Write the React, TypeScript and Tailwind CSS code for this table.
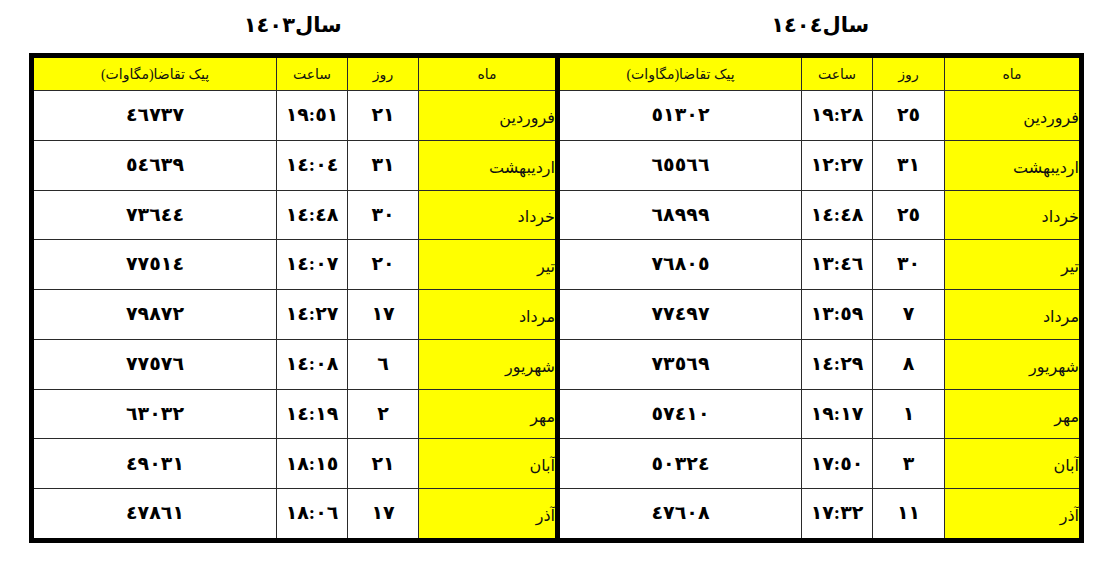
import React from "react";

const toAr = (s: string) => s.replace(/[0-9]/g, (d) => "٠١٢٣٤٥٦٧٨٩"[Number(d)]);

type Row = [string, string, string, string];

const left: Row[] = [
  ["فروردین", "21", "19:51", "46737"],
  ["اردیبهشت", "31", "14:04", "54639"],
  ["خرداد", "30", "14:48", "73644"],
  ["تیر", "20", "14:07", "77514"],
  ["مرداد", "17", "14:27", "79872"],
  ["شهریور", "6", "14:08", "77576"],
  ["مهر", "2", "14:19", "63032"],
  ["آبان", "21", "18:15", "49031"],
  ["آذر", "17", "18:06", "47861"],
];

const right: Row[] = [
  ["فروردین", "25", "19:28", "51302"],
  ["اردیبهشت", "31", "12:27", "65566"],
  ["خرداد", "25", "14:48", "68999"],
  ["تیر", "30", "13:46", "76805"],
  ["مرداد", "7", "13:59", "77497"],
  ["شهریور", "8", "14:29", "73569"],
  ["مهر", "1", "19:17", "57410"],
  ["آبان", "3", "17:50", "50324"],
  ["آذر", "11", "17:32", "47608"],
];

const font = { fontFamily: '"Liberation Serif", "DejaVu Sans", serif' };

function Table({ rows, cols }: { rows: Row[]; cols: string }) {
  return (
    <div className={`grid ${cols} grid-rows-[32px_repeat(9,1fr)] gap-px bg-[#2a2a2a] h-[480px]`}>
      <div dir="rtl" className="bg-[#ffff00] flex items-center justify-center text-[14px] text-[#111]">پیک تقاضا(مگاوات)</div>
      <div dir="rtl" className="bg-[#ffff00] flex items-center justify-center text-[14px] text-[#111]">ساعت</div>
      <div dir="rtl" className="bg-[#ffff00] flex items-center justify-center text-[14px] text-[#111]">روز</div>
      <div dir="rtl" className="bg-[#ffff00] flex items-center justify-center text-[14px] text-[#111]">ماه</div>
      {rows.map((r, i) => (
        <React.Fragment key={i}>
          <div className="bg-white flex items-center justify-center font-bold text-[19px] text-black">{toAr(r[3])}</div>
          <div dir="ltr" className="bg-white flex items-center justify-center font-bold text-[19px] text-black">{toAr(r[2])}</div>
          <div className="bg-white flex items-center justify-center font-bold text-[19px] text-black">{toAr(r[1])}</div>
          <div dir="rtl" className="bg-[#ffff00] flex items-center justify-start pt-[5px] text-[16px] text-[#111]">
            <span>{r[0]}</span>
          </div>
        </React.Fragment>
      ))}
    </div>
  );
}

export default function App() {
  return (
    <div className="w-[1108px] h-[579px] bg-white pl-[29px]" style={font}>
      <div className="flex w-[1055px] h-[53px]">
        <div dir="rtl" className="flex-1 flex items-center justify-center font-bold text-[21px] text-black pb-[2px]">{"سال" + toAr("1403")}</div>
        <div dir="rtl" className="flex-1 flex items-center justify-center font-bold text-[21px] text-black pb-[2px]">{"سال" + toAr("1404")}</div>
      </div>
      <div className="flex w-[1055px] border-[5px] border-black bg-black gap-[5px]">
        <Table rows={left} cols="grid-cols-[242px_70px_70px_136px]" />
        <Table rows={right} cols="grid-cols-[241px_70px_71px_134px]" />
      </div>
    </div>
  );
}
